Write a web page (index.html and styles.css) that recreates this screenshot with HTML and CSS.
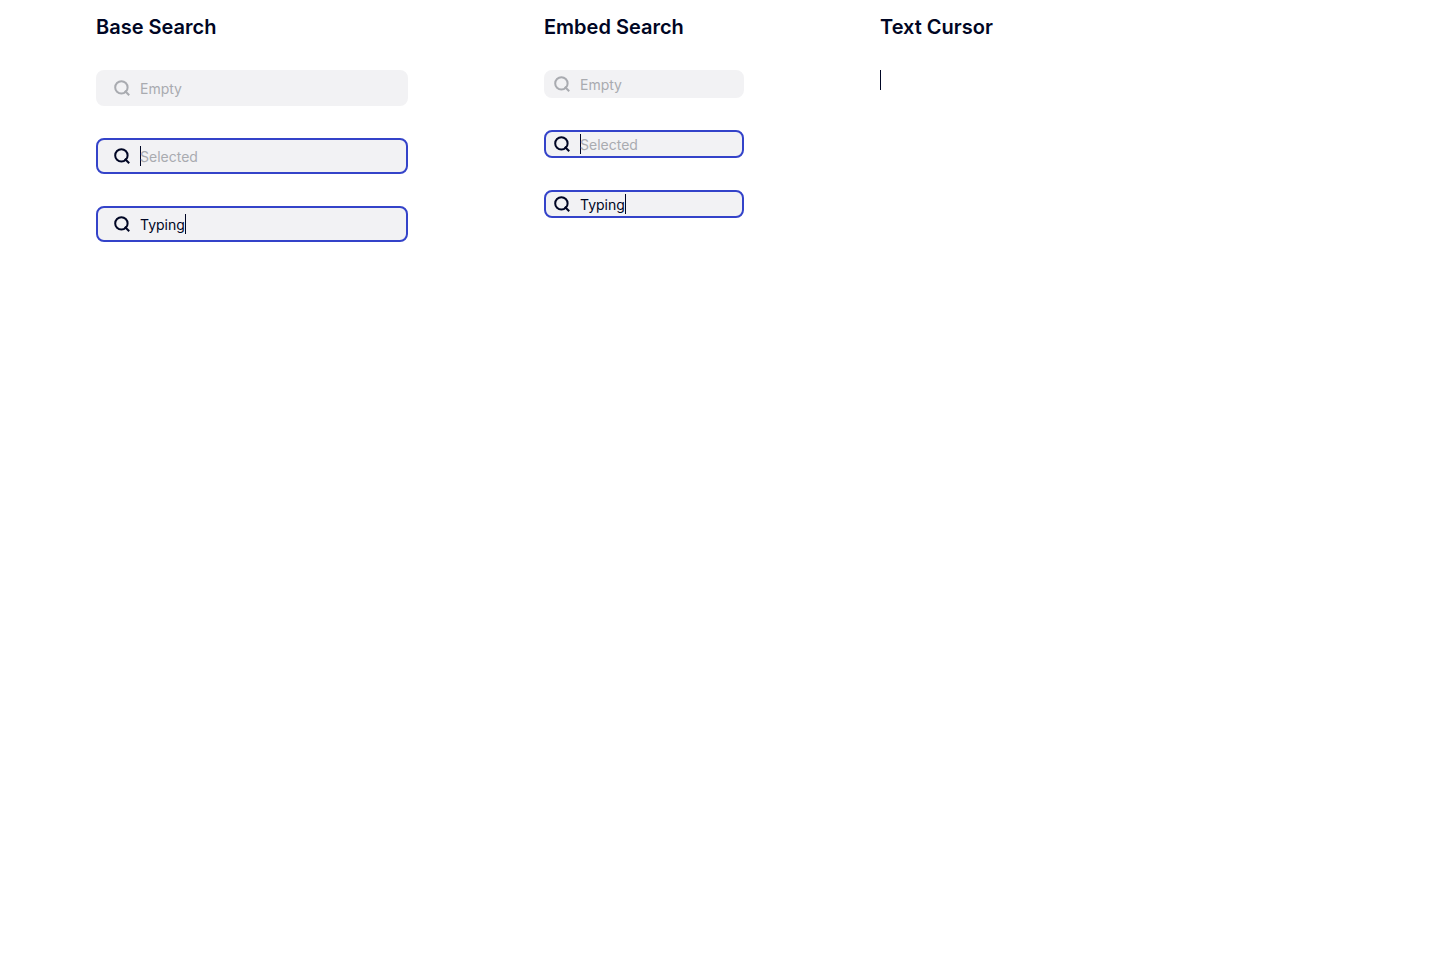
FILE: index.html
```html
<!DOCTYPE html>
<html lang="en">
<head>
    <meta charset="UTF-8">
    <meta name="viewport" content="width=device-width, initial-scale=1.0">
    <title>Search</title>
    <link rel="stylesheet" href="styles.css">
</head>
<body>
    <svg class="sprite" aria-hidden="true">
        <symbol id="icon-search" viewBox="0 0 20 20">
            <circle cx="9.4" cy="9.4" r="6.2" />
            <path d="M12.8 12.8l4.4 4.4" />
        </symbol>
    </svg>
    <main class="board">
        <section class="column column-base">
            <h2>Base Search</h2>
            <label class="search">
                <svg class="icon" aria-hidden="true"><use href="#icon-search" /></svg>
                <input type="text" placeholder="Empty" aria-label="Search">
            </label>
            <label class="search active">
                <svg class="icon" aria-hidden="true"><use href="#icon-search" /></svg>
                <span class="cursor"></span>
                <input type="text" placeholder="Selected" aria-label="Search">
            </label>
            <label class="search active typing">
                <svg class="icon" aria-hidden="true"><use href="#icon-search" /></svg>
                <input type="text" value="Typing" aria-label="Search">
                <span class="cursor"></span>
            </label>
        </section>
        <section class="column column-embed">
            <h2>Embed Search</h2>
            <label class="search embed">
                <svg class="icon" aria-hidden="true"><use href="#icon-search" /></svg>
                <input type="text" placeholder="Empty" aria-label="Search">
            </label>
            <label class="search embed active">
                <svg class="icon" aria-hidden="true"><use href="#icon-search" /></svg>
                <span class="cursor"></span>
                <input type="text" placeholder="Selected" aria-label="Search">
            </label>
            <label class="search embed active typing">
                <svg class="icon" aria-hidden="true"><use href="#icon-search" /></svg>
                <input type="text" value="Typing" aria-label="Search">
                <span class="cursor"></span>
            </label>
        </section>
        <section class="column">
            <h2>Text Cursor</h2>
            <span class="cursor"></span>
        </section>
    </main>
</body>
</html>
```
FILE: styles.css
```css
* {
    box-sizing: border-box;
}
body {
    margin: 0;
    background: #fff;
    color: #000624;
    font-family: Inter, "Noto Sans", sans-serif;
}
.sprite {
    display: none;
}
.board {
    display: flex;
    align-items: flex-start;
    gap: 136px;
    padding: 16px 96px;
}
.column {
    display: flex;
    flex-direction: column;
    gap: 32px;
    min-width: 0;
}
.column-base {
    flex: 0 1 312px;
}
.column-embed {
    flex: 0 1 200px;
}
h2 {
    margin: 0;
    font-size: 20px;
    line-height: 22px;
    font-weight: 600;
    white-space: nowrap;
}
.search {
    display: flex;
    align-items: center;
    height: 36px;
    padding: 0 14px;
    border: 2px solid #f2f2f4;
    border-radius: 8px;
    background: #f2f2f4;
    color: #a9abb0;
    cursor: text;
}
.search.embed {
    height: 28px;
    padding: 0 6px;
}
.search.active {
    border-color: #3443c9;
    color: #000624;
}
.icon {
    flex: none;
    width: 20px;
    height: 20px;
    margin-right: 8px;
    fill: none;
    stroke: currentColor;
    stroke-width: 2;
}
.search input {
    flex: 1;
    min-width: 0;
    height: 20px;
    margin: 0;
    padding: 1px 0 0;
    border: none;
    outline: none;
    background: transparent;
    color: #000624;
    font-family: inherit;
    font-size: 14px;
    line-height: 18px;
}
.search input::placeholder {
    color: #a9abb0;
    opacity: 1;
}
.search.typing input {
    flex: none;
    field-sizing: content;
}
.cursor {
    flex: none;
    width: 1px;
    height: 20px;
    background: #000624;
}
.search .cursor {
    margin-right: -1px;
}
```
